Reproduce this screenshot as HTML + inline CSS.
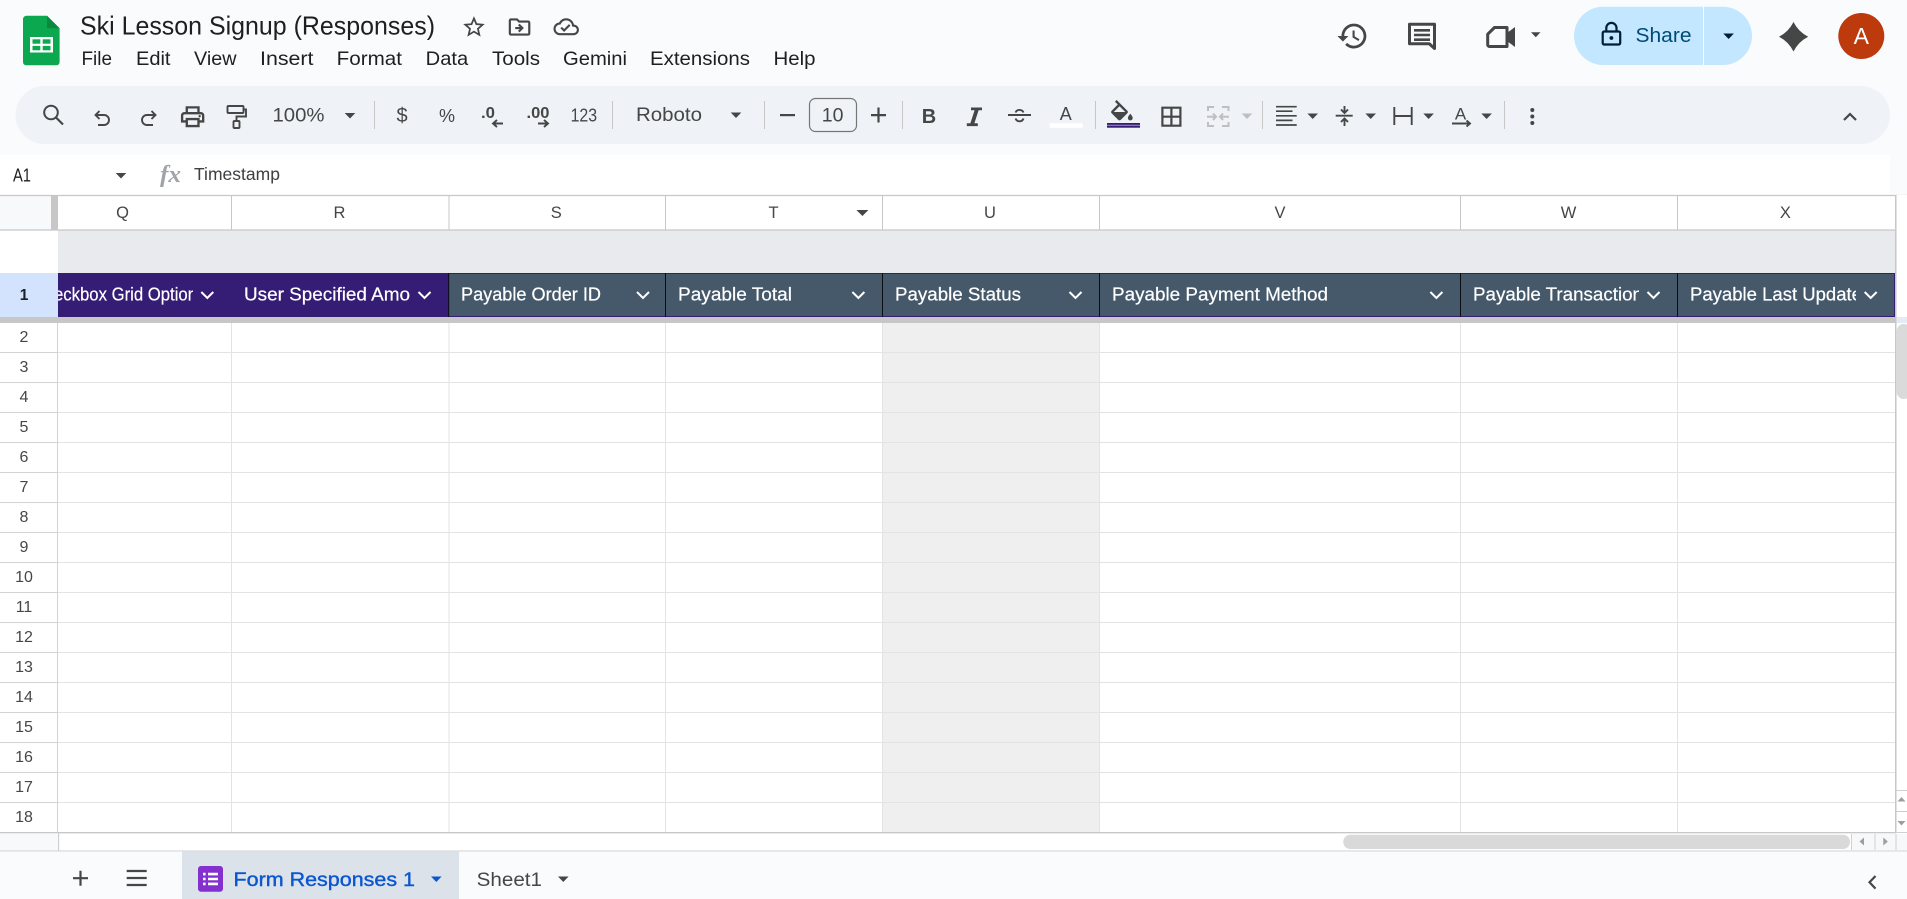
<!DOCTYPE html>
<html><head><meta charset="utf-8"><title>Ski Lesson Signup (Responses)</title>
<style>
html,body{margin:0;padding:0;width:1907px;height:899px;overflow:hidden;background:#f9fbfd}
svg{position:absolute;left:0;top:0;display:block}
text{font-family:"Liberation Sans",sans-serif}
.m{font-size:19.5px;fill:#1f1f1f}
.t{font-size:18px;fill:#444746}
.c{font-size:16.5px;fill:#444746;text-anchor:middle}
.r{font-size:16px;fill:#444746;text-anchor:middle}
.h{font-size:18px;fill:#fff;stroke:#fff;stroke-width:.2}
.i{fill:#444746}
.s{fill:none;stroke:#444746;stroke-width:1.9}
.ch{fill:none;stroke:#fff;stroke-width:2}
</style></head><body>
<svg width="1907" height="899" viewBox="0 0 1907 899" xmlns="http://www.w3.org/2000/svg">
<defs>
<clipPath id="cq"><rect x="58" y="273" width="135" height="44"/></clipPath>
<clipPath id="cw"><rect x="1461" y="273" width="178" height="44"/></clipPath>
<clipPath id="cx"><rect x="1678" y="273" width="178" height="44"/></clipPath>
</defs>
<rect width="1907" height="899" fill="#f9fbfd"/>

<!-- logo -->
<path d="M26.5 15.7H47L59.6 28.3V62a3.3 3.3 0 0 1-3.3 3.3H26.3A3.3 3.3 0 0 1 23 62V19.2a3.5 3.5 0 0 1 3.5-3.5z" fill="#0ca84f"/>
<path d="M47 15.7L59.6 28.3H47z" fill="#0a8a3f"/>
<rect x="30" y="37" width="23" height="15.5" fill="#fff"/>
<rect x="32.5" y="39.3" width="7.8" height="4.4" fill="#0ca84f"/><rect x="42.7" y="39.3" width="7.8" height="4.4" fill="#0ca84f"/>
<rect x="32.5" y="45.9" width="7.8" height="4.4" fill="#0ca84f"/><rect x="42.7" y="45.9" width="7.8" height="4.4" fill="#0ca84f"/>

<!-- title + menu -->
<text x="80" y="34.5" font-size="26" fill="#1f1f1f" textLength="355" lengthAdjust="spacingAndGlyphs">Ski Lesson Signup (Responses)</text>
<g class="i" transform="translate(461 14) scale(1.08)"><path d="M22 9.24l-7.19-.62L12 2 9.19 8.63 2 9.24l5.46 4.73L5.82 21 12 17.27 18.18 21l-1.63-7.03L22 9.24zM12 15.4l-3.76 2.27 1-4.28-3.32-2.88 4.38-.38L12 6.1l1.71 4.04 4.38.38-3.32 2.88 1 4.28L12 15.4z"/></g>
<g class="i" transform="translate(506.6 14) scale(1.08)"><path d="M20 6h-8l-2-2H4c-1.1 0-2 .9-2 2v12c0 1.1.9 2 2 2h16c1.1 0 2-.9 2-2V8c0-1.1-.9-2-2-2zm0 12H4V6h5.17l2 2H20v10zm-8.01-9l-1.41 1.41L12.16 12H8v2h4.16l-1.59 1.59L11.99 17 16 13.01 11.99 9z"/></g>
<g class="i" transform="translate(553.5 14) scale(1.06)"><path d="M19.35 10.04C18.67 6.59 15.64 4 12 4 9.11 4 6.6 5.64 5.35 8.04 2.34 8.36 0 10.91 0 14c0 3.31 2.69 6 6 6h13c2.76 0 5-2.24 5-5 0-2.64-2.05-4.78-4.65-4.96zM19 18H6c-2.21 0-4-1.79-4-4 0-2.05 1.53-3.76 3.56-3.97l1.07-.11.5-.95C8.08 7.14 9.94 6 12 6c2.62 0 4.88 1.86 5.39 4.43l.3 1.5 1.53.11c1.56.1 2.78 1.41 2.78 2.96 0 1.65-1.35 3-3 3zm-9-3.82l-2.09-2.09L6.5 13.5 10 17l6.01-6.01-1.41-1.41z"/></g>
<text class="m" x="81.5" y="65" textLength="30.5" lengthAdjust="spacingAndGlyphs">File</text>
<text class="m" x="136" y="65" textLength="34.5" lengthAdjust="spacingAndGlyphs">Edit</text>
<text class="m" x="194" y="65" textLength="42.5" lengthAdjust="spacingAndGlyphs">View</text>
<text class="m" x="260" y="65" textLength="53.5" lengthAdjust="spacingAndGlyphs">Insert</text>
<text class="m" x="336.7" y="65" textLength="65.3" lengthAdjust="spacingAndGlyphs">Format</text>
<text class="m" x="425.7" y="65" textLength="42.5" lengthAdjust="spacingAndGlyphs">Data</text>
<text class="m" x="492" y="65" textLength="48" lengthAdjust="spacingAndGlyphs">Tools</text>
<text class="m" x="563" y="65" textLength="64" lengthAdjust="spacingAndGlyphs">Gemini</text>
<text class="m" x="650" y="65" textLength="100" lengthAdjust="spacingAndGlyphs">Extensions</text>
<text class="m" x="773.5" y="65" textLength="42" lengthAdjust="spacingAndGlyphs">Help</text>

<!-- top right -->
<g class="i" transform="translate(1336 19.5) scale(1.38)"><path d="M13 3c-4.97 0-9 4.03-9 9H1l3.89 3.89.07.14L9 12H6c0-3.87 3.13-7 7-7s7 3.13 7 7-3.13 7-7 7c-1.93 0-3.68-.79-4.94-2.06l-1.42 1.42C8.27 19.99 10.51 21 13 21c4.97 0 9-4.03 9-9s-4.03-9-9-9zm-1 5v5l4.28 2.54.72-1.21-3.5-2.08V8H12z"/></g>
<path d="M1409.5 24.3H1434.5V48.5L1429.3 43.8H1409.5Z" fill="none" stroke="#444746" stroke-width="3" stroke-linejoin="round"/>
<path d="M1414 29h16v2.6h-16zM1414 33.7h16v2.6h-16zM1414 38.4h16v2.6h-16z" fill="#444746"/>
<path d="M1494.5 27.5H1507V46.5H1489.5a1.8 1.8 0 0 1-1.8-1.8V34.2Z" fill="none" stroke="#444746" stroke-width="3" stroke-linejoin="round"/>
<path d="M1507 33L1515 27V47L1507 41Z" fill="#444746"/>
<path d="M1531 32.2h9.5l-4.7 5z" fill="#444746"/>
<path d="M1603 6.7H1703V65H1603A29.2 29.2 0 0 1 1574 35.8A29.2 29.2 0 0 1 1603 6.7Z" fill="#c2e7ff"/>
<path d="M1704 6.7H1723A29.2 29.2 0 0 1 1752 35.8A29.2 29.2 0 0 1 1723 65H1704Z" fill="#c2e7ff"/>
<rect x="1602.7" y="31.5" width="17.5" height="13" rx="1.5" fill="none" stroke="#001d35" stroke-width="2.2"/>
<path d="M1606.3 31.5V28a5.1 5.1 0 0 1 10.2 0v3.5" fill="none" stroke="#001d35" stroke-width="2.2"/>
<circle cx="1611.4" cy="38" r="1.9" fill="#001d35"/>
<text x="1635.5" y="42" font-size="20" fill="#004a77" textLength="56" lengthAdjust="spacingAndGlyphs">Share</text>
<path d="M1723.3 33.5h10.6l-5.3 5.5z" fill="#001d35"/>
<path d="M1793.5 22Q1798.5 32 1808.2 36.7Q1798.5 41.5 1793.5 51.5Q1788.5 41.5 1779 36.7Q1788.5 32 1793.5 22Z" fill="#444746"/>
<circle cx="1861.3" cy="36" r="23" fill="#bc3a0c"/>
<text x="1861.3" y="44" font-size="23" fill="#fff" text-anchor="middle">A</text>

<!-- toolbar -->
<rect x="15.5" y="86" width="1874.5" height="58" rx="29" fill="#eff3f8"/>
<circle cx="51" cy="112.5" r="6.8" fill="none" stroke="#444746" stroke-width="2"/>
<path d="M56 117.5L63 124.5" stroke="#444746" stroke-width="2.2" fill="none"/>
<path class="s" d="M99.5 111L95.5 115L99.5 119M95.5 115H104a5 5 0 0 1 0 10H98"/>
<path class="s" d="M151.5 111L155.5 115L151.5 119M155.5 115H147a5 5 0 0 0 0 10H153"/>
<g class="i" transform="translate(178.6 102.7) scale(1.17)"><path d="M19 8h-1V3H6v5H5c-1.66 0-3 1.34-3 3v6h4v4h12v-4h4v-6c0-1.66-1.34-3-3-3zM8 5h8v3H8V5zm8 12v2H8v-4h8v2zm2-2v-2H6v2H4v-4c0-.55.45-1 1-1h14c.55 0 1 .45 1 1v4h-2z"/><circle cx="18" cy="11.5" r="1"/></g>
<rect class="s" x="227.5" y="106" width="16" height="7" rx="1"/>
<path class="s" d="M243.5 109.5H246V116.5H236.5V121"/>
<rect class="s" x="233.5" y="121" width="6" height="7" rx="1"/>
<text class="t" x="272.5" y="121.7" style="font-size:19.5px" textLength="52" lengthAdjust="spacingAndGlyphs">100%</text>
<path class="i" d="M344.7 113h10.6l-5.3 5.5z"/>
<rect x="374" y="101" width="1" height="28" fill="#c7c7c7"/>
<text class="t" x="402" y="122" text-anchor="middle" style="font-size:20px">$</text>
<text class="t" x="447" y="122" text-anchor="middle" style="font-size:18px">%</text>
<text class="t" x="481" y="118" style="font-size:15.5px;font-weight:bold" textLength="14" lengthAdjust="spacingAndGlyphs">.0</text>
<path class="s" d="M503 123.5H493M497 120L493 123.5L497 127"/>
<text class="t" x="526.5" y="118" style="font-size:15.5px;font-weight:bold" textLength="23" lengthAdjust="spacingAndGlyphs">.00</text>
<path class="s" d="M538 123.5H548M544 120L548 123.5L544 127"/>
<text class="t" x="570.6" y="121.5" style="font-size:18px" textLength="26.5" lengthAdjust="spacingAndGlyphs">123</text>
<rect x="612" y="101" width="1" height="28" fill="#c7c7c7"/>
<text class="t" x="636" y="121" style="font-size:19.5px" textLength="66" lengthAdjust="spacingAndGlyphs">Roboto</text>
<path class="i" d="M730.7 112.5h10.6l-5.3 5.5z"/>
<rect x="764" y="101" width="1" height="28" fill="#c7c7c7"/>
<rect x="780" y="114" width="15" height="2.2" fill="#444746"/>
<rect x="809.5" y="98.5" width="47" height="33" rx="6" fill="none" stroke="#747775" stroke-width="1.2"/>
<text class="t" x="832.6" y="121.5" text-anchor="middle" style="font-size:19.5px">10</text>
<path class="i" d="M871 114h15v2.2h-15zM877.4 107.5h2.2v15h-2.2z"/>
<rect x="902" y="101" width="1" height="28" fill="#c7c7c7"/>
<text class="t" x="929" y="123" text-anchor="middle" style="font-size:20px;font-weight:bold">B</text>
<path class="i" d="M971 107.5h11v2.8h-3.4l-4.2 13h3.4v2.8h-11v-2.8h3.6l4.2-13H971z"/>
<path class="s" d="M1008 115H1031"/>
<path class="s" d="M1015.5 112.5a4.3 4 0 0 1 8 0M1015.5 118.5a4.3 4.5 0 0 0 8 0"/>
<text class="t" x="1065.7" y="120" text-anchor="middle" style="font-size:18px">A</text>
<rect x="1049.8" y="123.3" width="33" height="4.4" fill="#fff"/>
<rect x="1095" y="101" width="1" height="28" fill="#c7c7c7"/>
<g class="i" transform="translate(1107.5 100) scale(1.2)"><path d="M16.56 8.94L7.62 0 6.21 1.41l2.38 2.38-5.15 5.15c-.59.59-.59 1.54 0 2.12l5.5 5.5c.29.29.68.44 1.06.44s.77-.15 1.06-.44l5.5-5.5c.59-.58.59-1.53 0-2.12zM5.21 10L10 5.21 14.79 10H5.21zM19 11.5s-2 2.17-2 3.5c0 1.1.9 2 2 2s2-.9 2-2c0-1.33-2-3.5-2-3.5z"/><path d="M5 10h10l-5 5z"/></g>
<rect x="1107" y="123" width="33" height="1.9" fill="#351c75"/>
<rect x="1107" y="124.9" width="33" height=".9" fill="#8a7fb0"/>
<rect x="1107" y="125.8" width="33" height="1.9" fill="#351c75"/>
<path d="M1162.4 107.7h18v18h-18zM1171.4 107.7v18M1162.4 116.7h18" fill="none" stroke="#444746" stroke-width="2.2"/>
<path d="M1214 107h-6v4M1222 107h6.5v4M1214 126h-6v-4M1222 126h6.5v-4M1207 116.7h9M1229 116.7h-9M1213 113.5l3 3.2-3 3.2M1223 113.5l-3 3.2 3 3.2" fill="none" stroke="#bdbfc1" stroke-width="2"/>
<path d="M1241.7 113.5h10.6l-5.3 5.5z" fill="#bdbfc1"/>
<rect x="1262" y="101" width="1" height="28" fill="#c7c7c7"/>
<path d="M1276 106.7h20.7M1276 111.2h16.5M1276 115.8h20.7M1276 120.4h16.5M1276 125h20.7" fill="none" stroke="#444746" stroke-width="1.7"/>
<path class="i" d="M1307.4 113.5h10.6l-5.3 5.5z"/>
<path class="s" d="M1335.7 115.7H1352.7M1344.5 106V112M1341 109.5L1344.5 113L1348 109.5M1344.5 126V119M1341 122L1344.5 118.5L1348 122"/>
<path class="i" d="M1365.4 113.5h10.6l-5.3 5.5z"/>
<path class="s" d="M1394.3 107V125M1411.7 107V125M1394.3 116H1411.7"/>
<path class="i" d="M1423.3 113.5h10.6l-5.3 5.5z"/>
<text class="t" x="1460.5" y="119.5" text-anchor="middle" style="font-size:17px">A</text>
<path class="s" d="M1452 123.5H1470M1466.5 120.5L1470 123.5L1466.5 126.5"/>
<path class="i" d="M1481.3 113.5h10.6l-5.3 5.5z"/>
<rect x="1504" y="101" width="1" height="28" fill="#c7c7c7"/>
<circle class="i" cx="1532.3" cy="110" r="2"/><circle class="i" cx="1532.3" cy="116.5" r="2"/><circle class="i" cx="1532.3" cy="123" r="2"/>
<path d="M1844 120L1850 114L1856 120" fill="none" stroke="#444746" stroke-width="2.2"/>

<!-- formula bar -->
<rect x="0" y="155" width="1890" height="40" fill="#fff"/>
<text x="13" y="181.5" font-size="18" fill="#1f1f1f" textLength="18" lengthAdjust="spacingAndGlyphs">A1</text>
<path class="i" d="M115.7 173h10.6l-5.3 5.5z"/>
<text x="160" y="182" font-size="24" fill="#a0a4a8" font-weight="bold" font-style="italic" style="font-family:'Liberation Serif',serif" textLength="21" lengthAdjust="spacingAndGlyphs">fx</text>
<text x="194" y="180" font-size="17.5" fill="#3c4043" textLength="86" lengthAdjust="spacingAndGlyphs">Timestamp</text>

<!-- grid base -->
<rect x="0" y="195" width="1896" height="638" fill="#fff"/>
<rect x="0" y="195" width="51" height="35" fill="#f8f9fa"/>
<rect x="51" y="195" width="7" height="35" fill="#c7c7c7"/>
<rect x="58" y="230" width="1837" height="43" fill="#e8eaed"/>
<rect x="0" y="273" width="58" height="44" fill="#d3e3fd"/>
<path d="M0 195.5H1907M0 230H1896" stroke="#c7c7c7" stroke-width="1.2" fill="none"/>
<path d="M231.5 196V230M449 196V230M665.5 196V230M882.5 196V230M1099.5 196V230M1460.5 196V230M1677.5 196V230" stroke="#c7c7c7" fill="none"/>

<!-- column letters -->
<text class="c" x="122.5" y="218">Q</text><text class="c" x="339.5" y="218">R</text><text class="c" x="556.3" y="218">S</text><text class="c" x="773.5" y="218">T</text><text class="c" x="990" y="218">U</text><text class="c" x="1280" y="218">V</text><text class="c" x="1568.6" y="218">W</text><text class="c" x="1785.4" y="218">X</text>
<path class="i" d="M856.4 210h12l-6 6z"/>

<!-- header row -->
<rect x="58" y="273" width="391" height="44" fill="#351c75"/>
<rect x="449" y="273" width="1446" height="44" fill="#45596b"/>
<path d="M449 273.5H1895M449 316.5H1895" stroke="#351c75" fill="none"/>
<path d="M448.7 273V317M665.5 273V317M882.5 273V317M1099.5 273V317M1460.5 273V317M1677.5 273V317" stroke="#0b0b12" fill="none"/>
<rect x="1894" y="273" width="1.2" height="44" fill="#351c75"/>
<g clip-path="url(#cq)"><text class="h" x="54" y="300.7" textLength="143" lengthAdjust="spacingAndGlyphs">eckbox Grid Option</text></g>
<text class="h" x="244" y="300.7" textLength="166" lengthAdjust="spacingAndGlyphs">User Specified Amo</text>
<text class="h" x="461" y="300.7" textLength="140" lengthAdjust="spacingAndGlyphs">Payable Order ID</text>
<text class="h" x="678" y="300.7" textLength="114" lengthAdjust="spacingAndGlyphs">Payable Total</text>
<text class="h" x="895" y="300.7" textLength="126" lengthAdjust="spacingAndGlyphs">Payable Status</text>
<text class="h" x="1112" y="300.7" textLength="216" lengthAdjust="spacingAndGlyphs">Payable Payment Method</text>
<g clip-path="url(#cw)"><text class="h" x="1473" y="300.7" textLength="170" lengthAdjust="spacingAndGlyphs">Payable Transaction</text></g>
<g clip-path="url(#cx)"><text class="h" x="1690" y="300.7" textLength="172" lengthAdjust="spacingAndGlyphs">Payable Last Update</text></g>
<path class="ch" d="M201.3 292L207.3 298L213.3 292M418.5 292L424.5 298L430.5 292M637 292L643 298L649 292M852.4 292L858.4 298L864.4 292M1069.5 292L1075.5 298L1081.5 292M1430.4 292L1436.4 298L1442.4 292M1647.5 292L1653.5 298L1659.5 292M1864.7 292L1870.7 298L1876.7 292"/>
<text x="24" y="300" font-size="15.5" font-weight="bold" fill="#1f1f1f" text-anchor="middle">1</text>
<rect x="0" y="317" width="1895" height="6" fill="#c7c7c7"/>

<!-- cells -->
<rect x="882.5" y="323" width="217" height="509" fill="#efefef"/>
<path d="M58 352.5H1895M58 382.5H1895M58 412.5H1895M58 442.5H1895M58 472.5H1895M58 502.5H1895M58 532.5H1895M58 562.5H1895M58 592.5H1895M58 622.5H1895M58 652.5H1895M58 682.5H1895M58 712.5H1895M58 742.5H1895M58 772.5H1895M58 802.5H1895" stroke="#e2e3e3" fill="none"/>
<path d="M231.5 323V832M449 323V832M665.5 323V832M882.5 323V832M1099.5 323V832M1460.5 323V832M1677.5 323V832" stroke="#e2e3e3" fill="none"/>
<path d="M0 352.5H58M0 382.5H58M0 412.5H58M0 442.5H58M0 472.5H58M0 502.5H58M0 532.5H58M0 562.5H58M0 592.5H58M0 622.5H58M0 652.5H58M0 682.5H58M0 712.5H58M0 742.5H58M0 772.5H58M0 802.5H58M57.5 323V832" stroke="#d2d3d4" fill="none"/>
<rect x="1895" y="195" width="1.6" height="638" fill="#c7c7c7"/>
<text class="r" x="24" y="342">2</text><text class="r" x="24" y="372">3</text><text class="r" x="24" y="402">4</text><text class="r" x="24" y="432">5</text><text class="r" x="24" y="462">6</text><text class="r" x="24" y="492">7</text><text class="r" x="24" y="522">8</text><text class="r" x="24" y="552">9</text><text class="r" x="24" y="582">10</text><text class="r" x="24" y="612">11</text><text class="r" x="24" y="642">12</text><text class="r" x="24" y="672">13</text><text class="r" x="24" y="702">14</text><text class="r" x="24" y="732">15</text><text class="r" x="24" y="762">16</text><text class="r" x="24" y="792">17</text><text class="r" x="24" y="822">18</text>

<!-- vertical scrollbar -->
<rect x="1896.6" y="195" width="10.4" height="656" fill="#fff"/>
<rect x="1896.6" y="317" width="10.4" height="6" fill="#e3ebf5"/>
<rect x="1896.8" y="324" width="14" height="75" rx="7" fill="#dadada"/>
<path d="M1896 790.5H1907M1896 832.5H1907" stroke="#d0d0d0" fill="none"/>
<path d="M1896 811.5H1907" stroke="#c3cbe6" fill="none"/>
<path d="M1897.5 801.5l4-4.5 4 4.5z" fill="#9e9e9e"/><path d="M1897.5 821l4 4.5 4-4.5z" fill="#9e9e9e"/>

<!-- horizontal scrollbar -->
<rect x="0" y="832" width="1896" height="1.4" fill="#c7c7c7"/>
<rect x="0" y="833.4" width="1907" height="17.6" fill="#fff"/>
<rect x="0" y="833.4" width="58" height="17.6" fill="#f8f9fa"/>
<rect x="58" y="833" width="1.2" height="18" fill="#d0d0d0"/>
<rect x="1343.3" y="834.7" width="506.7" height="14.3" rx="7" fill="#d9d9d9"/>
<rect x="1852" y="834" width="55" height="16" fill="#f7f8f9"/>
<path d="M1851.5 834V850M1875 834V850M1896 834V850" stroke="#d0d0d0" fill="none"/>
<path d="M1864 837.5l-4.5 4 4.5 4z" fill="#9e9e9e"/><path d="M1883.3 837.5l4.5 4-4.5 4z" fill="#9e9e9e"/>
<rect x="0" y="850.4" width="1907" height="1.2" fill="#d5d7d9"/>

<!-- tab bar -->
<rect x="0" y="851.6" width="1907" height="47.4" fill="#f9fbfd"/>
<path d="M73 878.2h15M80.5 870.7v15" stroke="#444746" stroke-width="2.2" fill="none"/>
<path d="M126.7 871h20M126.7 878h20M126.7 885h20" stroke="#444746" stroke-width="2.2" fill="none"/>
<rect x="182" y="851.6" width="277" height="47.4" fill="#dbe2ea"/>
<rect x="198" y="866" width="25" height="25.7" rx="3" fill="#8430ce"/>
<path d="M203 872.8h2.6v2.6H203zM203 877.7h2.6v2.6H203zM203 882.6h2.6v2.6H203z" fill="#fff"/>
<path d="M208 872.8h10v2.6h-10zM208 877.7h10v2.6h-10zM208 882.6h10v2.6h-10z" fill="#fff"/>
<text x="233.5" y="886" font-size="19.5" fill="#0b57d0" stroke="#0b57d0" stroke-width=".4" textLength="181.5" lengthAdjust="spacingAndGlyphs">Form Responses 1</text>
<path d="M431 876.5h10.6l-5.3 5.5z" fill="#0b57d0"/>
<text x="476.7" y="886" font-size="19.5" fill="#444746" textLength="65.3" lengthAdjust="spacingAndGlyphs">Sheet1</text>
<path class="i" d="M558 876.5h10.6l-5.3 5.5z"/>
<path d="M1875.5 876L1869.5 882.3L1875.5 888.6" fill="none" stroke="#444746" stroke-width="2.2"/>
</svg>
</body></html>
